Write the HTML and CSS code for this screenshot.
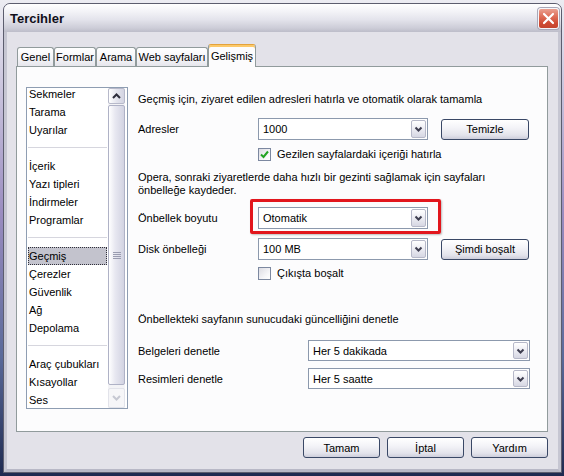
FILE: index.html
```html
<!DOCTYPE html>
<html lang="tr">
<head>
<meta charset="utf-8">
<title>Tercihler</title>
<link rel="stylesheet" href="styles.css">
</head>
<body>
<div class="window">
  <div class="titlebar">
    <span class="title">Tercihler</span>
    <div class="close"><svg width="19" height="19" viewBox="0 0 19 19"><path d="M5 5 L14 14 M14 5 L5 14" stroke="#fff" stroke-width="2.2" stroke-linecap="round"/></svg></div>
  </div>
  <div class="client">
    <div class="tabs">
      <div class="tab tab-general">Genel</div>
      <div class="tab tab-forms">Formlar</div>
      <div class="tab tab-search">Arama</div>
      <div class="tab tab-web">Web sayfaları</div>
      <div class="tab tab-advanced active">Gelişmiş</div>
    </div>
    <div class="panel">
      <div class="list">
        <div class="items">
          <div class="item">Sekmeler</div>
          <div class="item">Tarama</div>
          <div class="item">Uyarılar</div>
          <div class="sep"></div>
          <div class="item">İçerik</div>
          <div class="item">Yazı tipleri</div>
          <div class="item">İndirmeler</div>
          <div class="item">Programlar</div>
          <div class="sep"></div>
          <div class="item selected">Geçmiş</div>
          <div class="item">Çerezler</div>
          <div class="item">Güvenlik</div>
          <div class="item">Ağ</div>
          <div class="item">Depolama</div>
          <div class="sep"></div>
          <div class="item">Araç çubukları</div>
          <div class="item">Kısayollar</div>
          <div class="item">Ses</div>
        </div>
        <div class="scrollbar">
          <div class="sb-btn up"><svg width="11" height="8" viewBox="0 0 11 8"><path d="M2 6 L5.5 2.5 L9 6" fill="none" stroke="#2e2e3c" stroke-width="2"/></svg></div>
          <div class="thumb"><svg class="grip" width="8" height="7" viewBox="0 0 8 7"><path d="M0 0.5H8M0 2.5H8M0 4.5H8M0 6.5H8" stroke="#9a9cb0" stroke-width="1"/></svg></div>
          <div class="sb-btn down"><svg width="11" height="8" viewBox="0 0 11 8"><path d="M2 2 L5.5 5.5 L9 2" fill="none" stroke="#c6c8d2" stroke-width="2"/></svg></div>
        </div>
      </div>
      <div class="settings">
        <div class="heading">Geçmiş için, ziyaret edilen adresleri hatırla ve otomatik olarak tamamla</div>
        <div class="row row-addr">
          <span class="label">Adresler</span>
          <div class="combo"><span class="value">1000</span><span class="drop"><svg width="13" height="16" viewBox="0 0 13 16"><path d="M3.5 6.5 L6.5 9.5 L9.5 6.5" fill="none" stroke="#3e3e50" stroke-width="2"/></svg></span></div>
          <div class="btn">Temizle</div>
        </div>
        <div class="check-row check-remember">
          <span class="checkbox checked"><svg width="11" height="11" viewBox="0 0 11 11"><path d="M2 5.5 L4.5 8 L9 2.5" fill="none" stroke="#22a323" stroke-width="2"/></svg></span>
          <span>Gezilen sayfalardaki içeriği hatırla</span>
        </div>
        <p class="para">Opera, sonraki ziyaretlerde daha hızlı bir gezinti sağlamak için sayfaları<br>önbelleğe kaydeder.</p>
        <div class="row row-cache">
          <span class="label">Önbellek boyutu</span>
          <div class="combo marked"><span class="value">Otomatik</span><span class="drop"><svg width="13" height="16" viewBox="0 0 13 16"><path d="M3.5 6.5 L6.5 9.5 L9.5 6.5" fill="none" stroke="#3e3e50" stroke-width="2"/></svg></span><span class="highlight"></span></div>
        </div>
        <div class="row row-disk">
          <span class="label">Disk önbelleği</span>
          <div class="combo"><span class="value">100 MB</span><span class="drop"><svg width="13" height="16" viewBox="0 0 13 16"><path d="M3.5 6.5 L6.5 9.5 L9.5 6.5" fill="none" stroke="#3e3e50" stroke-width="2"/></svg></span></div>
          <div class="btn">Şimdi boşalt</div>
        </div>
        <div class="check-row check-exit">
          <span class="checkbox"></span>
          <span>Çıkışta boşalt</span>
        </div>
        <div class="heading heading-check">Önbellekteki sayfanın sunucudaki güncelliğini denetle</div>
        <div class="row wide row-docs">
          <span class="label">Belgeleri denetle</span>
          <div class="combo short"><span class="value">Her 5 dakikada</span><span class="drop"><svg width="13" height="16" viewBox="0 0 13 16"><path d="M3.5 6.5 L6.5 9.5 L9.5 6.5" fill="none" stroke="#3e3e50" stroke-width="2"/></svg></span></div>
        </div>
        <div class="row wide row-images">
          <span class="label">Resimleri denetle</span>
          <div class="combo short"><span class="value">Her 5 saatte</span><span class="drop"><svg width="13" height="16" viewBox="0 0 13 16"><path d="M3.5 6.5 L6.5 9.5 L9.5 6.5" fill="none" stroke="#3e3e50" stroke-width="2"/></svg></span></div>
        </div>
      </div>
    </div>
    <div class="footer">
      <div class="btn">Tamam</div>
      <div class="btn">İptal</div>
      <div class="btn">Yardım</div>
    </div>
  </div>
</div>
</body>
</html>
```
FILE: styles.css
```css
* { box-sizing: border-box; }
html, body { margin: 0; padding: 0; }
body {
  width: 564px;
  height: 476px;
  overflow: hidden;
  background: linear-gradient(to bottom, #ececf2 0%, #9a8cc0 45%, #5a6a9a 75%, #1f2a50 100%);
  font-family: "Liberation Sans", Arial, sans-serif;
  font-size: 11px;
  color: #000;
}
.window {
  margin: 3px 0 0 3px;
  width: 559px;
  height: 470px;
  border: 1px solid #5c5d6e;
  border-radius: 7px 7px 0 0;
  display: flex;
  flex-direction: column;
  overflow: hidden;
  background: #c6c6d2;
}
.titlebar {
  height: 28px;
  flex: none;
  display: flex;
  align-items: flex-start;
  justify-content: space-between;
  background: linear-gradient(to bottom, #ffffff 0%, #f4f4f8 25%, #e4e4ec 55%, #cdcdd8 85%, #bdbdc9 100%);
}
.title {
  font-weight: bold;
  font-size: 13px;
  line-height: 29px;
  padding-left: 6px;
  color: #10101a;
}
.close {
  width: 21px;
  height: 21px;
  margin: 4px 2px 0 0;
  border: 1px solid #f6f6fa;
  border-radius: 3px;
  background: linear-gradient(to bottom, #eaa091 0%, #de6e58 40%, #cf4a33 75%, #c4452f 100%);
  box-shadow: 0 0 0 1px #a8a8b8;
  display: flex;
  align-items: center;
  justify-content: center;
}
.client {
  flex: 1;
  border: 3px solid #c6c6d2;
  border-top: 0;
  border-bottom-color: #b8b8c6;
  background: #e3e2e9;
  padding: 0 10px 11px 9px;
  display: flex;
  flex-direction: column;
}
.tabs {
  height: 34px;
  flex: none;
  display: flex;
  align-items: flex-end;
  padding-left: 1px;
  position: relative;
  z-index: 1;
}
.tab {
  height: 19px;
  line-height: 18px;
  border: 1px solid #919b9c;
  border-bottom: 0;
  border-radius: 3px 3px 0 0;
  background: linear-gradient(to bottom, #ffffff, #f4f4f7 60%, #e6e6ec);
  white-space: nowrap;
  text-align: center;
}
.tab-general { width: 37px; }
.tab-forms { width: 42px; }
.tab-search { width: 40px; }
.tab-web { width: 72px; }
.tab-advanced { width: 48px; }
.tab.active {
  height: 23px;
  margin-bottom: -1px;
  line-height: 20px;
  background: #fcfcfd;
  border-top: 1px solid #e3a23c;
  box-shadow: inset 0 2px 0 #fcc969;
  padding-top: 1px;
}
.panel {
  height: 366px;
  flex: none;
  border: 1px solid #919b9c;
  background: #fcfcfd;
  display: flex;
  align-items: flex-start;
  padding: 20px 0 0 9px;
}
.list {
  width: 102px;
  height: 322px;
  flex: none;
  border: 1px solid #8e9db2;
  background: #fff;
  display: flex;
  overflow: hidden;
}
.items {
  flex: 1;
  padding: 0 1px;
  margin-top: -3px;
}
.item {
  height: 18px;
  line-height: 18px;
  padding-left: 1px;
  white-space: nowrap;
}
.item.selected {
  background: #c3c3cd;
  outline: 1px dotted #30303a;
  outline-offset: -1px;
}
.sep {
  height: 18px;
  background: linear-gradient(to bottom, transparent 8px, #d6d6de 8px, #d6d6de 9px, transparent 9px);
}
.scrollbar {
  width: 17px;
  flex: none;
  margin-right: 2px;
  display: flex;
  flex-direction: column;
  background: #f3f3f6;
}
.sb-btn {
  height: 16px;
  flex: none;
  border: 1px solid #b7b9ca;
  border-radius: 2px;
  background: linear-gradient(to right, #ffffff, #e4e5ee 50%, #d3d4e2);
  display: flex;
  align-items: center;
  justify-content: center;
}
.sb-btn.down {
  height: 20px;
  border-color: #e2e3ea;
  background: #f6f6f8;
}
.thumb {
  flex: 1;
  margin: 1px 0 3px;
  border: 1px solid #afb2c6;
  border-radius: 2px;
  background: linear-gradient(to right, #ffffff, #e8e8f1 40%, #d2d3e2);
  display: flex;
  justify-content: center;
  align-items: flex-start;
}
.grip { margin-top: 146px; }
.settings {
  margin: 5px 0 0 10px;
  display: flex;
  flex-direction: column;
}
.heading {
  height: 14px;
  line-height: 14px;
  white-space: nowrap;
}
.row {
  display: grid;
  grid-template-columns: 120px 170px 101px;
  align-items: center;
}
.row .btn { margin-left: 13px; }
.row.wide {
  grid-template-columns: 170px 222px;
}
.row-addr { margin-top: 12px; }
.check-remember { margin-top: 7px; }
.para { margin: 10px 0 0; line-height: 13px; white-space: nowrap; }
.row-cache { margin-top: 10px; }
.row-disk { margin-top: 9px; }
.check-exit { margin-top: 6px; }
.heading-check { margin-top: 32px; }
.row-docs { margin-top: 14px; }
.row-images { margin-top: 7px; }
.combo {
  height: 22px;
  border: 1px solid #8c99ad;
  background: #fff;
  display: flex;
  align-items: stretch;
  padding: 1px;
  position: relative;
}
.combo.short { height: 21px; }
.value {
  flex: 1;
  padding-left: 3px;
  display: flex;
  align-items: center;
  white-space: nowrap;
}
.drop {
  width: 15px;
  border: 1px solid #b6b8c8;
  border-radius: 2px;
  background: linear-gradient(to bottom, #ffffff, #eeeef4 45%, #d6d7e3);
  display: flex;
  align-items: center;
  justify-content: center;
}
.highlight {
  position: absolute;
  left: -9px;
  top: -9px;
  width: 191px;
  height: 35px;
  border: 3px solid #e2161d;
  border-radius: 2px;
  box-shadow: 1px 1px 2px rgba(0, 0, 0, 0.25);
  pointer-events: none;
}
.btn {
  height: 21px;
  border: 1px solid #3a4866;
  border-radius: 3px;
  background: linear-gradient(to bottom, #ffffff 0%, #f4f4f8 40%, #e3e3eb 80%, #cdcedb 100%);
  display: flex;
  align-items: center;
  justify-content: center;
  white-space: nowrap;
}
.check-row {
  height: 14px;
  display: flex;
  align-items: center;
  gap: 6px;
  padding-left: 120px;
}
.checkbox {
  width: 13px;
  height: 13px;
  border: 1px solid #7c88a0;
  background: linear-gradient(135deg, #dcdce3, #f8f8fa 70%, #ffffff);
  display: flex;
  align-items: center;
  justify-content: center;
}
.footer {
  display: flex;
  justify-content: flex-end;
  gap: 7px;
  margin-top: 5px;
}
.footer .btn { width: 77px; }
```
